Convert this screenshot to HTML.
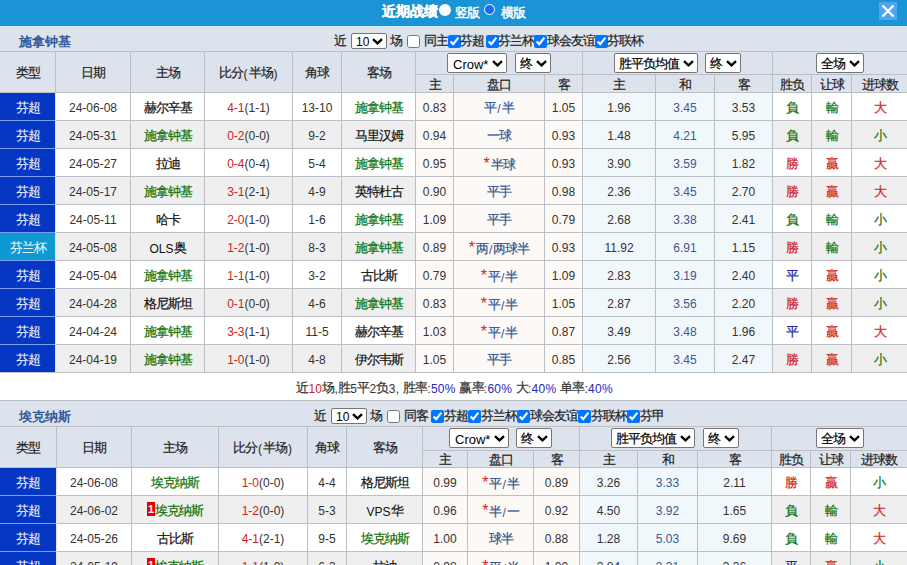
<!DOCTYPE html><html><head><meta charset="utf-8"><style>
html,body{margin:0;padding:0;width:907px;height:565px;overflow:hidden;background:#fff;font-family:"Liberation Sans",sans-serif;}
#r{position:relative;width:907px;height:565px;overflow:hidden}
#r div{position:absolute}
.t{text-align:center;white-space:nowrap}
.ast{color:#e02020;font-size:16px;position:relative;top:-1px;margin-right:1px}
.c{font-size:13px;letter-spacing:-1px;position:relative;top:-1px;-webkit-text-stroke:0.2px currentColor}
.ns .c{-webkit-text-stroke:0}
.w4 .c{-webkit-text-stroke:0.45px currentColor}
.sum .c{letter-spacing:-0.75px}
</style></head><body><div id="r">
<div style="left:0px;top:0px;width:907px;height:26px;background:#1a94d6;"></div>
<div style="left:0px;top:26px;width:907px;height:1px;background:#d2eaf8;"></div>
<div style="left:0px;top:27px;width:907px;height:24px;background:#dde3ed;"></div>
<div style="left:0px;top:52px;width:907px;height:40px;background:#dde3ed;"></div>
<div style="left:0px;top:93px;width:907px;height:27px;background:#ffffff;"></div>
<div style="left:416px;top:93px;width:166px;height:27px;background:#fcf9f6;"></div>
<div style="left:583px;top:93px;width:189px;height:27px;background:#f1f8fb;"></div>
<div style="left:0px;top:121px;width:907px;height:27px;background:#efefef;"></div>
<div style="left:416px;top:121px;width:166px;height:27px;background:#fcf9f6;"></div>
<div style="left:583px;top:121px;width:189px;height:27px;background:#f1f8fb;"></div>
<div style="left:0px;top:149px;width:907px;height:27px;background:#ffffff;"></div>
<div style="left:416px;top:149px;width:166px;height:27px;background:#fcf9f6;"></div>
<div style="left:583px;top:149px;width:189px;height:27px;background:#f1f8fb;"></div>
<div style="left:0px;top:177px;width:907px;height:27px;background:#efefef;"></div>
<div style="left:416px;top:177px;width:166px;height:27px;background:#fcf9f6;"></div>
<div style="left:583px;top:177px;width:189px;height:27px;background:#f1f8fb;"></div>
<div style="left:0px;top:205px;width:907px;height:27px;background:#ffffff;"></div>
<div style="left:416px;top:205px;width:166px;height:27px;background:#fcf9f6;"></div>
<div style="left:583px;top:205px;width:189px;height:27px;background:#f1f8fb;"></div>
<div style="left:0px;top:233px;width:907px;height:27px;background:#efefef;"></div>
<div style="left:416px;top:233px;width:166px;height:27px;background:#fcf9f6;"></div>
<div style="left:583px;top:233px;width:189px;height:27px;background:#f1f8fb;"></div>
<div style="left:0px;top:261px;width:907px;height:27px;background:#ffffff;"></div>
<div style="left:416px;top:261px;width:166px;height:27px;background:#fcf9f6;"></div>
<div style="left:583px;top:261px;width:189px;height:27px;background:#f1f8fb;"></div>
<div style="left:0px;top:289px;width:907px;height:27px;background:#efefef;"></div>
<div style="left:416px;top:289px;width:166px;height:27px;background:#fcf9f6;"></div>
<div style="left:583px;top:289px;width:189px;height:27px;background:#f1f8fb;"></div>
<div style="left:0px;top:317px;width:907px;height:27px;background:#ffffff;"></div>
<div style="left:416px;top:317px;width:166px;height:27px;background:#fcf9f6;"></div>
<div style="left:583px;top:317px;width:189px;height:27px;background:#f1f8fb;"></div>
<div style="left:0px;top:345px;width:907px;height:27px;background:#efefef;"></div>
<div style="left:416px;top:345px;width:166px;height:27px;background:#fcf9f6;"></div>
<div style="left:583px;top:345px;width:189px;height:27px;background:#f1f8fb;"></div>
<div style="left:0px;top:51px;width:907px;height:1px;background:#bcc0c5;"></div>
<div style="left:416px;top:74px;width:491px;height:1px;background:#bcc0c5;"></div>
<div style="left:0px;top:92px;width:907px;height:1px;background:#bcc0c5;"></div>
<div style="left:0px;top:120px;width:907px;height:1px;background:#bcc0c5;"></div>
<div style="left:0px;top:148px;width:907px;height:1px;background:#bcc0c5;"></div>
<div style="left:0px;top:176px;width:907px;height:1px;background:#bcc0c5;"></div>
<div style="left:0px;top:204px;width:907px;height:1px;background:#bcc0c5;"></div>
<div style="left:0px;top:232px;width:907px;height:1px;background:#bcc0c5;"></div>
<div style="left:0px;top:260px;width:907px;height:1px;background:#bcc0c5;"></div>
<div style="left:0px;top:288px;width:907px;height:1px;background:#bcc0c5;"></div>
<div style="left:0px;top:316px;width:907px;height:1px;background:#bcc0c5;"></div>
<div style="left:0px;top:344px;width:907px;height:1px;background:#bcc0c5;"></div>
<div style="left:0px;top:372px;width:907px;height:1px;background:#bcc0c5;"></div>
<div style="left:55px;top:51px;width:1px;height:322px;background:#bcc0c5;"></div>
<div style="left:130px;top:51px;width:1px;height:322px;background:#bcc0c5;"></div>
<div style="left:204px;top:51px;width:1px;height:322px;background:#bcc0c5;"></div>
<div style="left:292px;top:51px;width:1px;height:322px;background:#bcc0c5;"></div>
<div style="left:341px;top:51px;width:1px;height:322px;background:#bcc0c5;"></div>
<div style="left:415px;top:51px;width:1px;height:322px;background:#bcc0c5;"></div>
<div style="left:453px;top:74px;width:1px;height:299px;background:#bcc0c5;"></div>
<div style="left:544px;top:74px;width:1px;height:299px;background:#bcc0c5;"></div>
<div style="left:582px;top:51px;width:1px;height:322px;background:#bcc0c5;"></div>
<div style="left:655px;top:74px;width:1px;height:299px;background:#bcc0c5;"></div>
<div style="left:714px;top:74px;width:1px;height:299px;background:#bcc0c5;"></div>
<div style="left:772px;top:51px;width:1px;height:322px;background:#bcc0c5;"></div>
<div style="left:811px;top:74px;width:1px;height:299px;background:#bcc0c5;"></div>
<div style="left:851px;top:74px;width:1px;height:299px;background:#bcc0c5;"></div>
<div style="left:0px;top:93px;width:55px;height:27px;background:#0537c4;"></div>
<div style="left:0px;top:120px;width:55px;height:28px;background:#0537c4;"></div>
<div style="left:0px;top:148px;width:55px;height:28px;background:#0537c4;"></div>
<div style="left:0px;top:176px;width:55px;height:28px;background:#0537c4;"></div>
<div style="left:0px;top:204px;width:55px;height:28px;background:#0537c4;"></div>
<div style="left:0px;top:232px;width:55px;height:28px;background:#0e9ad0;"></div>
<div style="left:0px;top:260px;width:55px;height:28px;background:#0537c4;"></div>
<div style="left:0px;top:288px;width:55px;height:28px;background:#0537c4;"></div>
<div style="left:0px;top:316px;width:55px;height:28px;background:#0537c4;"></div>
<div style="left:0px;top:344px;width:55px;height:28px;background:#0537c4;"></div>
<div style="left:0px;top:120px;width:55px;height:1px;background:#7c9bee;"></div>
<div style="left:0px;top:148px;width:55px;height:1px;background:#7c9bee;"></div>
<div style="left:0px;top:176px;width:55px;height:1px;background:#7c9bee;"></div>
<div style="left:0px;top:204px;width:55px;height:1px;background:#7c9bee;"></div>
<div style="left:0px;top:232px;width:55px;height:1px;background:#7c9bee;"></div>
<div style="left:0px;top:260px;width:55px;height:1px;background:#7c9bee;"></div>
<div style="left:0px;top:288px;width:55px;height:1px;background:#7c9bee;"></div>
<div style="left:0px;top:316px;width:55px;height:1px;background:#7c9bee;"></div>
<div style="left:0px;top:344px;width:55px;height:1px;background:#7c9bee;"></div>
<div style="left:55px;top:93px;width:1px;height:279px;background:#dce4ff;"></div>
<div class="t " style="left:0px;top:54px;width:55px;height:40px;line-height:40px;color:#222;font-size:12px;font-weight:normal;"><span class="c">类型</span></div>
<div class="t " style="left:56px;top:54px;width:74px;height:40px;line-height:40px;color:#222;font-size:12px;font-weight:normal;"><span class="c">日期</span></div>
<div class="t " style="left:131px;top:54px;width:73px;height:40px;line-height:40px;color:#222;font-size:12px;font-weight:normal;"><span class="c">主场</span></div>
<div class="t " style="left:205px;top:54px;width:87px;height:40px;line-height:40px;color:#222;font-size:12px;font-weight:normal;"><span class="c">比分</span><span style="margin:0 1px">(</span><span class="c">半场</span><span style="margin:0 1px">)</span></div>
<div class="t " style="left:293px;top:54px;width:48px;height:40px;line-height:40px;color:#222;font-size:12px;font-weight:normal;"><span class="c">角球</span></div>
<div class="t " style="left:342px;top:54px;width:73px;height:40px;line-height:40px;color:#222;font-size:12px;font-weight:normal;"><span class="c">客场</span></div>
<div class="t " style="left:416px;top:77px;width:37px;height:17px;line-height:17px;color:#222;font-size:12px;font-weight:normal;"><span class="c">主</span></div>
<div class="t " style="left:454px;top:77px;width:90px;height:17px;line-height:17px;color:#222;font-size:12px;font-weight:normal;"><span class="c">盘口</span></div>
<div class="t " style="left:545px;top:77px;width:37px;height:17px;line-height:17px;color:#222;font-size:12px;font-weight:normal;"><span class="c">客</span></div>
<div class="t " style="left:583px;top:77px;width:72px;height:17px;line-height:17px;color:#222;font-size:12px;font-weight:normal;"><span class="c">主</span></div>
<div class="t " style="left:656px;top:77px;width:58px;height:17px;line-height:17px;color:#222;font-size:12px;font-weight:normal;"><span class="c">和</span></div>
<div class="t " style="left:715px;top:77px;width:57px;height:17px;line-height:17px;color:#222;font-size:12px;font-weight:normal;"><span class="c">客</span></div>
<div class="t " style="left:773px;top:77px;width:38px;height:17px;line-height:17px;color:#222;font-size:12px;font-weight:normal;"><span class="c">胜负</span></div>
<div class="t " style="left:812px;top:77px;width:39px;height:17px;line-height:17px;color:#222;font-size:12px;font-weight:normal;"><span class="c">让球</span></div>
<div class="t " style="left:852px;top:77px;width:55px;height:17px;line-height:17px;color:#222;font-size:12px;font-weight:normal;"><span class="c">进球数</span></div>
<div class="t ns" style="left:0px;top:95px;width:55px;height:27px;line-height:27px;color:#fff;font-size:12px;font-weight:normal;"><span class="c">芬超</span></div>
<div class="t " style="left:56px;top:95px;width:74px;height:27px;line-height:27px;color:#333;font-size:12px;font-weight:normal;">24-06-08</div>
<div class="t " style="left:131px;top:95px;width:73px;height:27px;line-height:27px;color:#111;font-size:12px;font-weight:normal;"><span class="c">赫尔辛基</span></div>
<div class="t " style="left:205px;top:95px;width:87px;height:27px;line-height:27px;color:#333;font-size:12px;font-weight:normal;"><span style="color:#d01c1c">4-1</span>(1-1)</div>
<div class="t " style="left:293px;top:95px;width:48px;height:27px;line-height:27px;color:#333;font-size:12px;font-weight:normal;">13-10</div>
<div class="t " style="left:342px;top:95px;width:73px;height:27px;line-height:27px;color:#0b720b;font-size:12px;font-weight:normal;"><span class="c">施拿钟基</span></div>
<div class="t " style="left:416px;top:95px;width:37px;height:27px;line-height:27px;color:#333;font-size:12px;font-weight:normal;">0.83</div>
<div class="t " style="left:454px;top:95px;width:90px;height:27px;line-height:27px;color:#2f5590;font-size:12px;font-weight:normal;"><span class="c">平</span><span style="margin:0 1px">/</span><span class="c">半</span></div>
<div class="t " style="left:545px;top:95px;width:37px;height:27px;line-height:27px;color:#333;font-size:12px;font-weight:normal;">1.05</div>
<div class="t " style="left:583px;top:95px;width:72px;height:27px;line-height:27px;color:#333;font-size:12px;font-weight:normal;">1.96</div>
<div class="t " style="left:656px;top:95px;width:58px;height:27px;line-height:27px;color:#3a5a90;font-size:12px;font-weight:normal;">3.45</div>
<div class="t " style="left:715px;top:95px;width:57px;height:27px;line-height:27px;color:#333;font-size:12px;font-weight:normal;">3.53</div>
<div class="t " style="left:773px;top:95px;width:38px;height:27px;line-height:27px;color:#0b720b;font-size:12px;font-weight:normal;"><span class="c">負</span></div>
<div class="t " style="left:812px;top:95px;width:39px;height:27px;line-height:27px;color:#0b720b;font-size:12px;font-weight:normal;"><span class="c">輸</span></div>
<div class="t " style="left:852px;top:95px;width:55px;height:27px;line-height:27px;color:#d01c1c;font-size:12px;font-weight:normal;"><span class="c">大</span></div>
<div class="t ns" style="left:0px;top:123px;width:55px;height:27px;line-height:27px;color:#fff;font-size:12px;font-weight:normal;"><span class="c">芬超</span></div>
<div class="t " style="left:56px;top:123px;width:74px;height:27px;line-height:27px;color:#333;font-size:12px;font-weight:normal;">24-05-31</div>
<div class="t " style="left:131px;top:123px;width:73px;height:27px;line-height:27px;color:#0b720b;font-size:12px;font-weight:normal;"><span class="c">施拿钟基</span></div>
<div class="t " style="left:205px;top:123px;width:87px;height:27px;line-height:27px;color:#333;font-size:12px;font-weight:normal;"><span style="color:#d01c1c">0-2</span>(0-0)</div>
<div class="t " style="left:293px;top:123px;width:48px;height:27px;line-height:27px;color:#333;font-size:12px;font-weight:normal;">9-2</div>
<div class="t " style="left:342px;top:123px;width:73px;height:27px;line-height:27px;color:#111;font-size:12px;font-weight:normal;"><span class="c">马里汉姆</span></div>
<div class="t " style="left:416px;top:123px;width:37px;height:27px;line-height:27px;color:#333;font-size:12px;font-weight:normal;">0.94</div>
<div class="t " style="left:454px;top:123px;width:90px;height:27px;line-height:27px;color:#2f5590;font-size:12px;font-weight:normal;"><span class="c">一球</span></div>
<div class="t " style="left:545px;top:123px;width:37px;height:27px;line-height:27px;color:#333;font-size:12px;font-weight:normal;">0.93</div>
<div class="t " style="left:583px;top:123px;width:72px;height:27px;line-height:27px;color:#333;font-size:12px;font-weight:normal;">1.48</div>
<div class="t " style="left:656px;top:123px;width:58px;height:27px;line-height:27px;color:#3a5a90;font-size:12px;font-weight:normal;">4.21</div>
<div class="t " style="left:715px;top:123px;width:57px;height:27px;line-height:27px;color:#333;font-size:12px;font-weight:normal;">5.95</div>
<div class="t " style="left:773px;top:123px;width:38px;height:27px;line-height:27px;color:#0b720b;font-size:12px;font-weight:normal;"><span class="c">負</span></div>
<div class="t " style="left:812px;top:123px;width:39px;height:27px;line-height:27px;color:#0b720b;font-size:12px;font-weight:normal;"><span class="c">輸</span></div>
<div class="t " style="left:852px;top:123px;width:55px;height:27px;line-height:27px;color:#0b720b;font-size:12px;font-weight:normal;"><span class="c">小</span></div>
<div class="t ns" style="left:0px;top:151px;width:55px;height:27px;line-height:27px;color:#fff;font-size:12px;font-weight:normal;"><span class="c">芬超</span></div>
<div class="t " style="left:56px;top:151px;width:74px;height:27px;line-height:27px;color:#333;font-size:12px;font-weight:normal;">24-05-27</div>
<div class="t " style="left:131px;top:151px;width:73px;height:27px;line-height:27px;color:#111;font-size:12px;font-weight:normal;"><span class="c">拉迪</span></div>
<div class="t " style="left:205px;top:151px;width:87px;height:27px;line-height:27px;color:#333;font-size:12px;font-weight:normal;"><span style="color:#d01c1c">0-4</span>(0-4)</div>
<div class="t " style="left:293px;top:151px;width:48px;height:27px;line-height:27px;color:#333;font-size:12px;font-weight:normal;">5-4</div>
<div class="t " style="left:342px;top:151px;width:73px;height:27px;line-height:27px;color:#0b720b;font-size:12px;font-weight:normal;"><span class="c">施拿钟基</span></div>
<div class="t " style="left:416px;top:151px;width:37px;height:27px;line-height:27px;color:#333;font-size:12px;font-weight:normal;">0.95</div>
<div class="t " style="left:454px;top:151px;width:90px;height:27px;line-height:27px;color:#2f5590;font-size:12px;font-weight:normal;"><span class="ast">*</span><span class="c">半球</span></div>
<div class="t " style="left:545px;top:151px;width:37px;height:27px;line-height:27px;color:#333;font-size:12px;font-weight:normal;">0.93</div>
<div class="t " style="left:583px;top:151px;width:72px;height:27px;line-height:27px;color:#333;font-size:12px;font-weight:normal;">3.90</div>
<div class="t " style="left:656px;top:151px;width:58px;height:27px;line-height:27px;color:#3a5a90;font-size:12px;font-weight:normal;">3.59</div>
<div class="t " style="left:715px;top:151px;width:57px;height:27px;line-height:27px;color:#333;font-size:12px;font-weight:normal;">1.82</div>
<div class="t " style="left:773px;top:151px;width:38px;height:27px;line-height:27px;color:#d01c1c;font-size:12px;font-weight:normal;"><span class="c">勝</span></div>
<div class="t " style="left:812px;top:151px;width:39px;height:27px;line-height:27px;color:#d01c1c;font-size:12px;font-weight:normal;"><span class="c">贏</span></div>
<div class="t " style="left:852px;top:151px;width:55px;height:27px;line-height:27px;color:#d01c1c;font-size:12px;font-weight:normal;"><span class="c">大</span></div>
<div class="t ns" style="left:0px;top:179px;width:55px;height:27px;line-height:27px;color:#fff;font-size:12px;font-weight:normal;"><span class="c">芬超</span></div>
<div class="t " style="left:56px;top:179px;width:74px;height:27px;line-height:27px;color:#333;font-size:12px;font-weight:normal;">24-05-17</div>
<div class="t " style="left:131px;top:179px;width:73px;height:27px;line-height:27px;color:#0b720b;font-size:12px;font-weight:normal;"><span class="c">施拿钟基</span></div>
<div class="t " style="left:205px;top:179px;width:87px;height:27px;line-height:27px;color:#333;font-size:12px;font-weight:normal;"><span style="color:#d01c1c">3-1</span>(2-1)</div>
<div class="t " style="left:293px;top:179px;width:48px;height:27px;line-height:27px;color:#333;font-size:12px;font-weight:normal;">4-9</div>
<div class="t " style="left:342px;top:179px;width:73px;height:27px;line-height:27px;color:#111;font-size:12px;font-weight:normal;"><span class="c">英特杜古</span></div>
<div class="t " style="left:416px;top:179px;width:37px;height:27px;line-height:27px;color:#333;font-size:12px;font-weight:normal;">0.90</div>
<div class="t " style="left:454px;top:179px;width:90px;height:27px;line-height:27px;color:#2f5590;font-size:12px;font-weight:normal;"><span class="c">平手</span></div>
<div class="t " style="left:545px;top:179px;width:37px;height:27px;line-height:27px;color:#333;font-size:12px;font-weight:normal;">0.98</div>
<div class="t " style="left:583px;top:179px;width:72px;height:27px;line-height:27px;color:#333;font-size:12px;font-weight:normal;">2.36</div>
<div class="t " style="left:656px;top:179px;width:58px;height:27px;line-height:27px;color:#3a5a90;font-size:12px;font-weight:normal;">3.45</div>
<div class="t " style="left:715px;top:179px;width:57px;height:27px;line-height:27px;color:#333;font-size:12px;font-weight:normal;">2.70</div>
<div class="t " style="left:773px;top:179px;width:38px;height:27px;line-height:27px;color:#d01c1c;font-size:12px;font-weight:normal;"><span class="c">勝</span></div>
<div class="t " style="left:812px;top:179px;width:39px;height:27px;line-height:27px;color:#d01c1c;font-size:12px;font-weight:normal;"><span class="c">贏</span></div>
<div class="t " style="left:852px;top:179px;width:55px;height:27px;line-height:27px;color:#d01c1c;font-size:12px;font-weight:normal;"><span class="c">大</span></div>
<div class="t ns" style="left:0px;top:207px;width:55px;height:27px;line-height:27px;color:#fff;font-size:12px;font-weight:normal;"><span class="c">芬超</span></div>
<div class="t " style="left:56px;top:207px;width:74px;height:27px;line-height:27px;color:#333;font-size:12px;font-weight:normal;">24-05-11</div>
<div class="t " style="left:131px;top:207px;width:73px;height:27px;line-height:27px;color:#111;font-size:12px;font-weight:normal;"><span class="c">哈卡</span></div>
<div class="t " style="left:205px;top:207px;width:87px;height:27px;line-height:27px;color:#333;font-size:12px;font-weight:normal;"><span style="color:#d01c1c">2-0</span>(1-0)</div>
<div class="t " style="left:293px;top:207px;width:48px;height:27px;line-height:27px;color:#333;font-size:12px;font-weight:normal;">1-6</div>
<div class="t " style="left:342px;top:207px;width:73px;height:27px;line-height:27px;color:#0b720b;font-size:12px;font-weight:normal;"><span class="c">施拿钟基</span></div>
<div class="t " style="left:416px;top:207px;width:37px;height:27px;line-height:27px;color:#333;font-size:12px;font-weight:normal;">1.09</div>
<div class="t " style="left:454px;top:207px;width:90px;height:27px;line-height:27px;color:#2f5590;font-size:12px;font-weight:normal;"><span class="c">平手</span></div>
<div class="t " style="left:545px;top:207px;width:37px;height:27px;line-height:27px;color:#333;font-size:12px;font-weight:normal;">0.79</div>
<div class="t " style="left:583px;top:207px;width:72px;height:27px;line-height:27px;color:#333;font-size:12px;font-weight:normal;">2.68</div>
<div class="t " style="left:656px;top:207px;width:58px;height:27px;line-height:27px;color:#3a5a90;font-size:12px;font-weight:normal;">3.38</div>
<div class="t " style="left:715px;top:207px;width:57px;height:27px;line-height:27px;color:#333;font-size:12px;font-weight:normal;">2.41</div>
<div class="t " style="left:773px;top:207px;width:38px;height:27px;line-height:27px;color:#0b720b;font-size:12px;font-weight:normal;"><span class="c">負</span></div>
<div class="t " style="left:812px;top:207px;width:39px;height:27px;line-height:27px;color:#0b720b;font-size:12px;font-weight:normal;"><span class="c">輸</span></div>
<div class="t " style="left:852px;top:207px;width:55px;height:27px;line-height:27px;color:#0b720b;font-size:12px;font-weight:normal;"><span class="c">小</span></div>
<div class="t ns" style="left:0px;top:235px;width:55px;height:27px;line-height:27px;color:#fff;font-size:12px;font-weight:normal;"><span class="c">芬兰杯</span></div>
<div class="t " style="left:56px;top:235px;width:74px;height:27px;line-height:27px;color:#333;font-size:12px;font-weight:normal;">24-05-08</div>
<div class="t " style="left:131px;top:235px;width:73px;height:27px;line-height:27px;color:#111;font-size:12px;font-weight:normal;">OLS<span class="c">奥</span></div>
<div class="t " style="left:205px;top:235px;width:87px;height:27px;line-height:27px;color:#333;font-size:12px;font-weight:normal;"><span style="color:#d01c1c">1-2</span>(1-0)</div>
<div class="t " style="left:293px;top:235px;width:48px;height:27px;line-height:27px;color:#333;font-size:12px;font-weight:normal;">8-3</div>
<div class="t " style="left:342px;top:235px;width:73px;height:27px;line-height:27px;color:#0b720b;font-size:12px;font-weight:normal;"><span class="c">施拿钟基</span></div>
<div class="t " style="left:416px;top:235px;width:37px;height:27px;line-height:27px;color:#333;font-size:12px;font-weight:normal;">0.89</div>
<div class="t " style="left:454px;top:235px;width:90px;height:27px;line-height:27px;color:#2f5590;font-size:12px;font-weight:normal;"><span class="ast">*</span><span class="c">两</span><span style="margin:0 1px">/</span><span class="c">两球半</span></div>
<div class="t " style="left:545px;top:235px;width:37px;height:27px;line-height:27px;color:#333;font-size:12px;font-weight:normal;">0.93</div>
<div class="t " style="left:583px;top:235px;width:72px;height:27px;line-height:27px;color:#333;font-size:12px;font-weight:normal;">11.92</div>
<div class="t " style="left:656px;top:235px;width:58px;height:27px;line-height:27px;color:#3a5a90;font-size:12px;font-weight:normal;">6.91</div>
<div class="t " style="left:715px;top:235px;width:57px;height:27px;line-height:27px;color:#333;font-size:12px;font-weight:normal;">1.15</div>
<div class="t " style="left:773px;top:235px;width:38px;height:27px;line-height:27px;color:#d01c1c;font-size:12px;font-weight:normal;"><span class="c">勝</span></div>
<div class="t " style="left:812px;top:235px;width:39px;height:27px;line-height:27px;color:#0b720b;font-size:12px;font-weight:normal;"><span class="c">輸</span></div>
<div class="t " style="left:852px;top:235px;width:55px;height:27px;line-height:27px;color:#0b720b;font-size:12px;font-weight:normal;"><span class="c">小</span></div>
<div class="t ns" style="left:0px;top:263px;width:55px;height:27px;line-height:27px;color:#fff;font-size:12px;font-weight:normal;"><span class="c">芬超</span></div>
<div class="t " style="left:56px;top:263px;width:74px;height:27px;line-height:27px;color:#333;font-size:12px;font-weight:normal;">24-05-04</div>
<div class="t " style="left:131px;top:263px;width:73px;height:27px;line-height:27px;color:#0b720b;font-size:12px;font-weight:normal;"><span class="c">施拿钟基</span></div>
<div class="t " style="left:205px;top:263px;width:87px;height:27px;line-height:27px;color:#333;font-size:12px;font-weight:normal;"><span style="color:#d01c1c">1-1</span>(1-0)</div>
<div class="t " style="left:293px;top:263px;width:48px;height:27px;line-height:27px;color:#333;font-size:12px;font-weight:normal;">3-2</div>
<div class="t " style="left:342px;top:263px;width:73px;height:27px;line-height:27px;color:#111;font-size:12px;font-weight:normal;"><span class="c">古比斯</span></div>
<div class="t " style="left:416px;top:263px;width:37px;height:27px;line-height:27px;color:#333;font-size:12px;font-weight:normal;">0.79</div>
<div class="t " style="left:454px;top:263px;width:90px;height:27px;line-height:27px;color:#2f5590;font-size:12px;font-weight:normal;"><span class="ast">*</span><span class="c">平</span><span style="margin:0 1px">/</span><span class="c">半</span></div>
<div class="t " style="left:545px;top:263px;width:37px;height:27px;line-height:27px;color:#333;font-size:12px;font-weight:normal;">1.09</div>
<div class="t " style="left:583px;top:263px;width:72px;height:27px;line-height:27px;color:#333;font-size:12px;font-weight:normal;">2.83</div>
<div class="t " style="left:656px;top:263px;width:58px;height:27px;line-height:27px;color:#3a5a90;font-size:12px;font-weight:normal;">3.19</div>
<div class="t " style="left:715px;top:263px;width:57px;height:27px;line-height:27px;color:#333;font-size:12px;font-weight:normal;">2.40</div>
<div class="t " style="left:773px;top:263px;width:38px;height:27px;line-height:27px;color:#1a1aa0;font-size:12px;font-weight:normal;"><span class="c">平</span></div>
<div class="t " style="left:812px;top:263px;width:39px;height:27px;line-height:27px;color:#d01c1c;font-size:12px;font-weight:normal;"><span class="c">贏</span></div>
<div class="t " style="left:852px;top:263px;width:55px;height:27px;line-height:27px;color:#0b720b;font-size:12px;font-weight:normal;"><span class="c">小</span></div>
<div class="t ns" style="left:0px;top:291px;width:55px;height:27px;line-height:27px;color:#fff;font-size:12px;font-weight:normal;"><span class="c">芬超</span></div>
<div class="t " style="left:56px;top:291px;width:74px;height:27px;line-height:27px;color:#333;font-size:12px;font-weight:normal;">24-04-28</div>
<div class="t " style="left:131px;top:291px;width:73px;height:27px;line-height:27px;color:#111;font-size:12px;font-weight:normal;"><span class="c">格尼斯坦</span></div>
<div class="t " style="left:205px;top:291px;width:87px;height:27px;line-height:27px;color:#333;font-size:12px;font-weight:normal;"><span style="color:#d01c1c">0-1</span>(0-0)</div>
<div class="t " style="left:293px;top:291px;width:48px;height:27px;line-height:27px;color:#333;font-size:12px;font-weight:normal;">4-6</div>
<div class="t " style="left:342px;top:291px;width:73px;height:27px;line-height:27px;color:#0b720b;font-size:12px;font-weight:normal;"><span class="c">施拿钟基</span></div>
<div class="t " style="left:416px;top:291px;width:37px;height:27px;line-height:27px;color:#333;font-size:12px;font-weight:normal;">0.83</div>
<div class="t " style="left:454px;top:291px;width:90px;height:27px;line-height:27px;color:#2f5590;font-size:12px;font-weight:normal;"><span class="ast">*</span><span class="c">平</span><span style="margin:0 1px">/</span><span class="c">半</span></div>
<div class="t " style="left:545px;top:291px;width:37px;height:27px;line-height:27px;color:#333;font-size:12px;font-weight:normal;">1.05</div>
<div class="t " style="left:583px;top:291px;width:72px;height:27px;line-height:27px;color:#333;font-size:12px;font-weight:normal;">2.87</div>
<div class="t " style="left:656px;top:291px;width:58px;height:27px;line-height:27px;color:#3a5a90;font-size:12px;font-weight:normal;">3.56</div>
<div class="t " style="left:715px;top:291px;width:57px;height:27px;line-height:27px;color:#333;font-size:12px;font-weight:normal;">2.20</div>
<div class="t " style="left:773px;top:291px;width:38px;height:27px;line-height:27px;color:#d01c1c;font-size:12px;font-weight:normal;"><span class="c">勝</span></div>
<div class="t " style="left:812px;top:291px;width:39px;height:27px;line-height:27px;color:#d01c1c;font-size:12px;font-weight:normal;"><span class="c">贏</span></div>
<div class="t " style="left:852px;top:291px;width:55px;height:27px;line-height:27px;color:#0b720b;font-size:12px;font-weight:normal;"><span class="c">小</span></div>
<div class="t ns" style="left:0px;top:319px;width:55px;height:27px;line-height:27px;color:#fff;font-size:12px;font-weight:normal;"><span class="c">芬超</span></div>
<div class="t " style="left:56px;top:319px;width:74px;height:27px;line-height:27px;color:#333;font-size:12px;font-weight:normal;">24-04-24</div>
<div class="t " style="left:131px;top:319px;width:73px;height:27px;line-height:27px;color:#0b720b;font-size:12px;font-weight:normal;"><span class="c">施拿钟基</span></div>
<div class="t " style="left:205px;top:319px;width:87px;height:27px;line-height:27px;color:#333;font-size:12px;font-weight:normal;"><span style="color:#d01c1c">3-3</span>(1-1)</div>
<div class="t " style="left:293px;top:319px;width:48px;height:27px;line-height:27px;color:#333;font-size:12px;font-weight:normal;">11-5</div>
<div class="t " style="left:342px;top:319px;width:73px;height:27px;line-height:27px;color:#111;font-size:12px;font-weight:normal;"><span class="c">赫尔辛基</span></div>
<div class="t " style="left:416px;top:319px;width:37px;height:27px;line-height:27px;color:#333;font-size:12px;font-weight:normal;">1.03</div>
<div class="t " style="left:454px;top:319px;width:90px;height:27px;line-height:27px;color:#2f5590;font-size:12px;font-weight:normal;"><span class="ast">*</span><span class="c">平</span><span style="margin:0 1px">/</span><span class="c">半</span></div>
<div class="t " style="left:545px;top:319px;width:37px;height:27px;line-height:27px;color:#333;font-size:12px;font-weight:normal;">0.87</div>
<div class="t " style="left:583px;top:319px;width:72px;height:27px;line-height:27px;color:#333;font-size:12px;font-weight:normal;">3.49</div>
<div class="t " style="left:656px;top:319px;width:58px;height:27px;line-height:27px;color:#3a5a90;font-size:12px;font-weight:normal;">3.48</div>
<div class="t " style="left:715px;top:319px;width:57px;height:27px;line-height:27px;color:#333;font-size:12px;font-weight:normal;">1.96</div>
<div class="t " style="left:773px;top:319px;width:38px;height:27px;line-height:27px;color:#1a1aa0;font-size:12px;font-weight:normal;"><span class="c">平</span></div>
<div class="t " style="left:812px;top:319px;width:39px;height:27px;line-height:27px;color:#d01c1c;font-size:12px;font-weight:normal;"><span class="c">贏</span></div>
<div class="t " style="left:852px;top:319px;width:55px;height:27px;line-height:27px;color:#d01c1c;font-size:12px;font-weight:normal;"><span class="c">大</span></div>
<div class="t ns" style="left:0px;top:347px;width:55px;height:27px;line-height:27px;color:#fff;font-size:12px;font-weight:normal;"><span class="c">芬超</span></div>
<div class="t " style="left:56px;top:347px;width:74px;height:27px;line-height:27px;color:#333;font-size:12px;font-weight:normal;">24-04-19</div>
<div class="t " style="left:131px;top:347px;width:73px;height:27px;line-height:27px;color:#0b720b;font-size:12px;font-weight:normal;"><span class="c">施拿钟基</span></div>
<div class="t " style="left:205px;top:347px;width:87px;height:27px;line-height:27px;color:#333;font-size:12px;font-weight:normal;"><span style="color:#d01c1c">1-0</span>(1-0)</div>
<div class="t " style="left:293px;top:347px;width:48px;height:27px;line-height:27px;color:#333;font-size:12px;font-weight:normal;">4-8</div>
<div class="t " style="left:342px;top:347px;width:73px;height:27px;line-height:27px;color:#111;font-size:12px;font-weight:normal;"><span class="c">伊尔韦斯</span></div>
<div class="t " style="left:416px;top:347px;width:37px;height:27px;line-height:27px;color:#333;font-size:12px;font-weight:normal;">1.05</div>
<div class="t " style="left:454px;top:347px;width:90px;height:27px;line-height:27px;color:#2f5590;font-size:12px;font-weight:normal;"><span class="c">平手</span></div>
<div class="t " style="left:545px;top:347px;width:37px;height:27px;line-height:27px;color:#333;font-size:12px;font-weight:normal;">0.85</div>
<div class="t " style="left:583px;top:347px;width:72px;height:27px;line-height:27px;color:#333;font-size:12px;font-weight:normal;">2.56</div>
<div class="t " style="left:656px;top:347px;width:58px;height:27px;line-height:27px;color:#3a5a90;font-size:12px;font-weight:normal;">3.45</div>
<div class="t " style="left:715px;top:347px;width:57px;height:27px;line-height:27px;color:#333;font-size:12px;font-weight:normal;">2.47</div>
<div class="t " style="left:773px;top:347px;width:38px;height:27px;line-height:27px;color:#d01c1c;font-size:12px;font-weight:normal;"><span class="c">勝</span></div>
<div class="t " style="left:812px;top:347px;width:39px;height:27px;line-height:27px;color:#d01c1c;font-size:12px;font-weight:normal;"><span class="c">贏</span></div>
<div class="t " style="left:852px;top:347px;width:55px;height:27px;line-height:27px;color:#0b720b;font-size:12px;font-weight:normal;"><span class="c">小</span></div>
<div class="t " style="left:0px;top:30px;width:120px;height:24px;line-height:24px;color:#34589a;font-size:13px;font-weight:bold;text-align:left;padding-left:19px;">施拿钟基</div>
<div style="left:0px;top:373px;width:907px;height:27px;background:#fff;"></div>
<div class="t sum" style="left:0px;top:375px;width:907px;height:27px;line-height:27px;color:#333;font-size:12px;font-weight:normal;letter-spacing:0.25px;padding-left:1px;"><span class="c">近</span><span style="color:#d01c1c">10</span><span class="c">场</span>,<span class="c">胜</span>5<span class="c">平</span>2<span class="c">负</span>3, <span class="c">胜率</span>:<span style="color:#2626c0">50%</span> <span class="c">赢率</span>:<span style="color:#2626c0">60%</span> <span class="c">大</span>:<span style="color:#2626c0">40%</span> <span class="c">单率</span>:<span style="color:#2626c0">40%</span></div>
<div style="left:0px;top:400px;width:907px;height:1px;background:#bcc0c5;"></div>
<div style="left:0px;top:401px;width:907px;height:25px;background:#dde3ed;"></div>
<div style="left:0px;top:427px;width:907px;height:40px;background:#dde3ed;"></div>
<div style="left:0px;top:468px;width:907px;height:27px;background:#ffffff;"></div>
<div style="left:423px;top:468px;width:156px;height:27px;background:#fcf9f6;"></div>
<div style="left:580px;top:468px;width:191px;height:27px;background:#f1f8fb;"></div>
<div style="left:0px;top:496px;width:907px;height:27px;background:#efefef;"></div>
<div style="left:423px;top:496px;width:156px;height:27px;background:#fcf9f6;"></div>
<div style="left:580px;top:496px;width:191px;height:27px;background:#f1f8fb;"></div>
<div style="left:0px;top:524px;width:907px;height:27px;background:#ffffff;"></div>
<div style="left:423px;top:524px;width:156px;height:27px;background:#fcf9f6;"></div>
<div style="left:580px;top:524px;width:191px;height:27px;background:#f1f8fb;"></div>
<div style="left:0px;top:552px;width:907px;height:27px;background:#efefef;"></div>
<div style="left:423px;top:552px;width:156px;height:27px;background:#fcf9f6;"></div>
<div style="left:580px;top:552px;width:191px;height:27px;background:#f1f8fb;"></div>
<div style="left:0px;top:426px;width:907px;height:1px;background:#bcc0c5;"></div>
<div style="left:423px;top:450px;width:484px;height:1px;background:#bcc0c5;"></div>
<div style="left:0px;top:467px;width:907px;height:1px;background:#bcc0c5;"></div>
<div style="left:0px;top:495px;width:907px;height:1px;background:#bcc0c5;"></div>
<div style="left:0px;top:523px;width:907px;height:1px;background:#bcc0c5;"></div>
<div style="left:0px;top:551px;width:907px;height:1px;background:#bcc0c5;"></div>
<div style="left:0px;top:579px;width:907px;height:1px;background:#bcc0c5;"></div>
<div style="left:56px;top:426px;width:1px;height:154px;background:#bcc0c5;"></div>
<div style="left:131px;top:426px;width:1px;height:154px;background:#bcc0c5;"></div>
<div style="left:218px;top:426px;width:1px;height:154px;background:#bcc0c5;"></div>
<div style="left:307px;top:426px;width:1px;height:154px;background:#bcc0c5;"></div>
<div style="left:346px;top:426px;width:1px;height:154px;background:#bcc0c5;"></div>
<div style="left:422px;top:426px;width:1px;height:154px;background:#bcc0c5;"></div>
<div style="left:467px;top:450px;width:1px;height:130px;background:#bcc0c5;"></div>
<div style="left:533px;top:450px;width:1px;height:130px;background:#bcc0c5;"></div>
<div style="left:579px;top:426px;width:1px;height:154px;background:#bcc0c5;"></div>
<div style="left:637px;top:450px;width:1px;height:130px;background:#bcc0c5;"></div>
<div style="left:697px;top:450px;width:1px;height:130px;background:#bcc0c5;"></div>
<div style="left:771px;top:426px;width:1px;height:154px;background:#bcc0c5;"></div>
<div style="left:810px;top:450px;width:1px;height:130px;background:#bcc0c5;"></div>
<div style="left:850px;top:450px;width:1px;height:130px;background:#bcc0c5;"></div>
<div style="left:0px;top:468px;width:56px;height:27px;background:#0537c4;"></div>
<div style="left:0px;top:495px;width:56px;height:28px;background:#0537c4;"></div>
<div style="left:0px;top:523px;width:56px;height:28px;background:#0537c4;"></div>
<div style="left:0px;top:551px;width:56px;height:28px;background:#0537c4;"></div>
<div style="left:0px;top:495px;width:56px;height:1px;background:#7c9bee;"></div>
<div style="left:0px;top:523px;width:56px;height:1px;background:#7c9bee;"></div>
<div style="left:0px;top:551px;width:56px;height:1px;background:#7c9bee;"></div>
<div style="left:56px;top:468px;width:1px;height:111px;background:#dce4ff;"></div>
<div class="t " style="left:0px;top:429px;width:56px;height:40px;line-height:40px;color:#222;font-size:12px;font-weight:normal;"><span class="c">类型</span></div>
<div class="t " style="left:57px;top:429px;width:74px;height:40px;line-height:40px;color:#222;font-size:12px;font-weight:normal;"><span class="c">日期</span></div>
<div class="t " style="left:132px;top:429px;width:86px;height:40px;line-height:40px;color:#222;font-size:12px;font-weight:normal;"><span class="c">主场</span></div>
<div class="t " style="left:219px;top:429px;width:88px;height:40px;line-height:40px;color:#222;font-size:12px;font-weight:normal;"><span class="c">比分</span><span style="margin:0 1px">(</span><span class="c">半场</span><span style="margin:0 1px">)</span></div>
<div class="t " style="left:308px;top:429px;width:38px;height:40px;line-height:40px;color:#222;font-size:12px;font-weight:normal;"><span class="c">角球</span></div>
<div class="t " style="left:347px;top:429px;width:75px;height:40px;line-height:40px;color:#222;font-size:12px;font-weight:normal;"><span class="c">客场</span></div>
<div class="t " style="left:423px;top:453px;width:44px;height:16px;line-height:16px;color:#222;font-size:12px;font-weight:normal;"><span class="c">主</span></div>
<div class="t " style="left:468px;top:453px;width:65px;height:16px;line-height:16px;color:#222;font-size:12px;font-weight:normal;"><span class="c">盘口</span></div>
<div class="t " style="left:534px;top:453px;width:45px;height:16px;line-height:16px;color:#222;font-size:12px;font-weight:normal;"><span class="c">客</span></div>
<div class="t " style="left:580px;top:453px;width:57px;height:16px;line-height:16px;color:#222;font-size:12px;font-weight:normal;"><span class="c">主</span></div>
<div class="t " style="left:638px;top:453px;width:59px;height:16px;line-height:16px;color:#222;font-size:12px;font-weight:normal;"><span class="c">和</span></div>
<div class="t " style="left:698px;top:453px;width:73px;height:16px;line-height:16px;color:#222;font-size:12px;font-weight:normal;"><span class="c">客</span></div>
<div class="t " style="left:772px;top:453px;width:38px;height:16px;line-height:16px;color:#222;font-size:12px;font-weight:normal;"><span class="c">胜负</span></div>
<div class="t " style="left:811px;top:453px;width:39px;height:16px;line-height:16px;color:#222;font-size:12px;font-weight:normal;"><span class="c">让球</span></div>
<div class="t " style="left:851px;top:453px;width:56px;height:16px;line-height:16px;color:#222;font-size:12px;font-weight:normal;"><span class="c">进球数</span></div>
<div class="t ns" style="left:0px;top:470px;width:56px;height:27px;line-height:27px;color:#fff;font-size:12px;font-weight:normal;"><span class="c">芬超</span></div>
<div class="t " style="left:57px;top:470px;width:74px;height:27px;line-height:27px;color:#333;font-size:12px;font-weight:normal;">24-06-08</div>
<div class="t " style="left:132px;top:470px;width:86px;height:27px;line-height:27px;color:#0b720b;font-size:12px;font-weight:normal;"><span class="c">埃克纳斯</span></div>
<div class="t " style="left:219px;top:470px;width:88px;height:27px;line-height:27px;color:#333;font-size:12px;font-weight:normal;"><span style="color:#d01c1c">1-0</span>(0-0)</div>
<div class="t " style="left:308px;top:470px;width:38px;height:27px;line-height:27px;color:#333;font-size:12px;font-weight:normal;">4-4</div>
<div class="t " style="left:347px;top:470px;width:75px;height:27px;line-height:27px;color:#111;font-size:12px;font-weight:normal;"><span class="c">格尼斯坦</span></div>
<div class="t " style="left:423px;top:470px;width:44px;height:27px;line-height:27px;color:#333;font-size:12px;font-weight:normal;">0.99</div>
<div class="t " style="left:468px;top:470px;width:65px;height:27px;line-height:27px;color:#2f5590;font-size:12px;font-weight:normal;"><span class="ast">*</span><span class="c">平</span><span style="margin:0 1px">/</span><span class="c">半</span></div>
<div class="t " style="left:534px;top:470px;width:45px;height:27px;line-height:27px;color:#333;font-size:12px;font-weight:normal;">0.89</div>
<div class="t " style="left:580px;top:470px;width:57px;height:27px;line-height:27px;color:#333;font-size:12px;font-weight:normal;">3.26</div>
<div class="t " style="left:638px;top:470px;width:59px;height:27px;line-height:27px;color:#3a5a90;font-size:12px;font-weight:normal;">3.33</div>
<div class="t " style="left:698px;top:470px;width:73px;height:27px;line-height:27px;color:#333;font-size:12px;font-weight:normal;">2.11</div>
<div class="t " style="left:772px;top:470px;width:38px;height:27px;line-height:27px;color:#d01c1c;font-size:12px;font-weight:normal;"><span class="c">勝</span></div>
<div class="t " style="left:811px;top:470px;width:39px;height:27px;line-height:27px;color:#d01c1c;font-size:12px;font-weight:normal;"><span class="c">贏</span></div>
<div class="t " style="left:851px;top:470px;width:56px;height:27px;line-height:27px;color:#0b720b;font-size:12px;font-weight:normal;"><span class="c">小</span></div>
<div class="t ns" style="left:0px;top:498px;width:56px;height:27px;line-height:27px;color:#fff;font-size:12px;font-weight:normal;"><span class="c">芬超</span></div>
<div class="t " style="left:57px;top:498px;width:74px;height:27px;line-height:27px;color:#333;font-size:12px;font-weight:normal;">24-06-02</div>
<div class="t " style="left:132px;top:498px;width:86px;height:27px;line-height:27px;color:#0b720b;font-size:12px;font-weight:normal;"><span style="display:inline-block;background:#e00000;color:#fff;font-weight:bold;font-size:11px;width:8px;height:14px;line-height:14px;text-align:center;vertical-align:middle;position:relative;top:-4px">1</span><span class="c">埃克纳斯</span></div>
<div class="t " style="left:219px;top:498px;width:88px;height:27px;line-height:27px;color:#333;font-size:12px;font-weight:normal;"><span style="color:#d01c1c">1-2</span>(0-0)</div>
<div class="t " style="left:308px;top:498px;width:38px;height:27px;line-height:27px;color:#333;font-size:12px;font-weight:normal;">5-3</div>
<div class="t " style="left:347px;top:498px;width:75px;height:27px;line-height:27px;color:#111;font-size:12px;font-weight:normal;">VPS<span class="c">华</span></div>
<div class="t " style="left:423px;top:498px;width:44px;height:27px;line-height:27px;color:#333;font-size:12px;font-weight:normal;">0.96</div>
<div class="t " style="left:468px;top:498px;width:65px;height:27px;line-height:27px;color:#2f5590;font-size:12px;font-weight:normal;"><span class="ast">*</span><span class="c">半</span><span style="margin:0 1px">/</span><span class="c">一</span></div>
<div class="t " style="left:534px;top:498px;width:45px;height:27px;line-height:27px;color:#333;font-size:12px;font-weight:normal;">0.92</div>
<div class="t " style="left:580px;top:498px;width:57px;height:27px;line-height:27px;color:#333;font-size:12px;font-weight:normal;">4.50</div>
<div class="t " style="left:638px;top:498px;width:59px;height:27px;line-height:27px;color:#3a5a90;font-size:12px;font-weight:normal;">3.92</div>
<div class="t " style="left:698px;top:498px;width:73px;height:27px;line-height:27px;color:#333;font-size:12px;font-weight:normal;">1.65</div>
<div class="t " style="left:772px;top:498px;width:38px;height:27px;line-height:27px;color:#0b720b;font-size:12px;font-weight:normal;"><span class="c">負</span></div>
<div class="t " style="left:811px;top:498px;width:39px;height:27px;line-height:27px;color:#0b720b;font-size:12px;font-weight:normal;"><span class="c">輸</span></div>
<div class="t " style="left:851px;top:498px;width:56px;height:27px;line-height:27px;color:#d01c1c;font-size:12px;font-weight:normal;"><span class="c">大</span></div>
<div class="t ns" style="left:0px;top:526px;width:56px;height:27px;line-height:27px;color:#fff;font-size:12px;font-weight:normal;"><span class="c">芬超</span></div>
<div class="t " style="left:57px;top:526px;width:74px;height:27px;line-height:27px;color:#333;font-size:12px;font-weight:normal;">24-05-26</div>
<div class="t " style="left:132px;top:526px;width:86px;height:27px;line-height:27px;color:#111;font-size:12px;font-weight:normal;"><span class="c">古比斯</span></div>
<div class="t " style="left:219px;top:526px;width:88px;height:27px;line-height:27px;color:#333;font-size:12px;font-weight:normal;"><span style="color:#d01c1c">4-1</span>(2-1)</div>
<div class="t " style="left:308px;top:526px;width:38px;height:27px;line-height:27px;color:#333;font-size:12px;font-weight:normal;">9-5</div>
<div class="t " style="left:347px;top:526px;width:75px;height:27px;line-height:27px;color:#0b720b;font-size:12px;font-weight:normal;"><span class="c">埃克纳斯</span></div>
<div class="t " style="left:423px;top:526px;width:44px;height:27px;line-height:27px;color:#333;font-size:12px;font-weight:normal;">1.00</div>
<div class="t " style="left:468px;top:526px;width:65px;height:27px;line-height:27px;color:#2f5590;font-size:12px;font-weight:normal;"><span class="c">球半</span></div>
<div class="t " style="left:534px;top:526px;width:45px;height:27px;line-height:27px;color:#333;font-size:12px;font-weight:normal;">0.88</div>
<div class="t " style="left:580px;top:526px;width:57px;height:27px;line-height:27px;color:#333;font-size:12px;font-weight:normal;">1.28</div>
<div class="t " style="left:638px;top:526px;width:59px;height:27px;line-height:27px;color:#3a5a90;font-size:12px;font-weight:normal;">5.03</div>
<div class="t " style="left:698px;top:526px;width:73px;height:27px;line-height:27px;color:#333;font-size:12px;font-weight:normal;">9.69</div>
<div class="t " style="left:772px;top:526px;width:38px;height:27px;line-height:27px;color:#0b720b;font-size:12px;font-weight:normal;"><span class="c">負</span></div>
<div class="t " style="left:811px;top:526px;width:39px;height:27px;line-height:27px;color:#0b720b;font-size:12px;font-weight:normal;"><span class="c">輸</span></div>
<div class="t " style="left:851px;top:526px;width:56px;height:27px;line-height:27px;color:#d01c1c;font-size:12px;font-weight:normal;"><span class="c">大</span></div>
<div class="t ns" style="left:0px;top:554px;width:56px;height:27px;line-height:27px;color:#fff;font-size:12px;font-weight:normal;"><span class="c">芬超</span></div>
<div class="t " style="left:57px;top:554px;width:74px;height:27px;line-height:27px;color:#333;font-size:12px;font-weight:normal;">24-05-19</div>
<div class="t " style="left:132px;top:554px;width:86px;height:27px;line-height:27px;color:#0b720b;font-size:12px;font-weight:normal;"><span style="display:inline-block;background:#e00000;color:#fff;font-weight:bold;font-size:11px;width:8px;height:14px;line-height:14px;text-align:center;vertical-align:middle;position:relative;top:-4px">1</span><span class="c">埃克纳斯</span></div>
<div class="t " style="left:219px;top:554px;width:88px;height:27px;line-height:27px;color:#333;font-size:12px;font-weight:normal;"><span style="color:#d01c1c">1-1</span>(1-0)</div>
<div class="t " style="left:308px;top:554px;width:38px;height:27px;line-height:27px;color:#333;font-size:12px;font-weight:normal;">6-3</div>
<div class="t " style="left:347px;top:554px;width:75px;height:27px;line-height:27px;color:#111;font-size:12px;font-weight:normal;"><span class="c">拉迪</span></div>
<div class="t " style="left:423px;top:554px;width:44px;height:27px;line-height:27px;color:#333;font-size:12px;font-weight:normal;">0.98</div>
<div class="t " style="left:468px;top:554px;width:65px;height:27px;line-height:27px;color:#2f5590;font-size:12px;font-weight:normal;"><span class="ast">*</span><span class="c">平</span><span style="margin:0 1px">/</span><span class="c">半</span></div>
<div class="t " style="left:534px;top:554px;width:45px;height:27px;line-height:27px;color:#333;font-size:12px;font-weight:normal;">1.00</div>
<div class="t " style="left:580px;top:554px;width:57px;height:27px;line-height:27px;color:#333;font-size:12px;font-weight:normal;">2.84</div>
<div class="t " style="left:638px;top:554px;width:59px;height:27px;line-height:27px;color:#3a5a90;font-size:12px;font-weight:normal;">3.31</div>
<div class="t " style="left:698px;top:554px;width:73px;height:27px;line-height:27px;color:#333;font-size:12px;font-weight:normal;">3.36</div>
<div class="t " style="left:772px;top:554px;width:38px;height:27px;line-height:27px;color:#1a1aa0;font-size:12px;font-weight:normal;"><span class="c">平</span></div>
<div class="t " style="left:811px;top:554px;width:39px;height:27px;line-height:27px;color:#d01c1c;font-size:12px;font-weight:normal;"><span class="c">贏</span></div>
<div class="t " style="left:851px;top:554px;width:56px;height:27px;line-height:27px;color:#0b720b;font-size:12px;font-weight:normal;"><span class="c">小</span></div>
<div class="t " style="left:0px;top:404px;width:120px;height:25px;line-height:25px;color:#34589a;font-size:13px;font-weight:bold;text-align:left;padding-left:19px;">埃克纳斯</div>
<div class="t" style="left:382px;top:-2px;height:26px;line-height:26px;color:#fff;font-size:14px;font-weight:bold;text-align:left;-webkit-text-stroke:0.3px #fff">近期战绩</div>
<div style="left:439px;top:4px;width:12px;height:12px;border-radius:50%;background:#fff"></div>
<div class="w4" style="left:455px;top:7px;line-height:14px;height:14px;font-size:12px;color:#fff;white-space:nowrap;"><span class="c">竖版</span></div>
<div style="left:484px;top:4px;width:9px;height:9px;border-radius:50%;background:#1b6cec;border:1.5px solid #fff"></div>
<div class="w4" style="left:501px;top:7px;line-height:14px;height:14px;font-size:12px;color:#fff;white-space:nowrap;"><span class="c">横版</span></div>
<div style="left:879px;top:2px;width:18px;height:18px;background:#4fa6ee"><svg width="18" height="18" viewBox="0 0 18 18" style="position:absolute;left:0;top:0"><path d="M3.5 3.5 L14.5 14.5 M14.5 3.5 L3.5 14.5" stroke="#fff" stroke-width="2.4"/></svg></div>
<div class="" style="left:334px;top:35px;line-height:14px;height:14px;font-size:12px;color:#222;white-space:nowrap;"><span class="c">近</span></div>
<div style="left:351px;top:33px;width:34px;height:14px;border:1px solid #767676;border-radius:2px;background:#fff"><div style="left:4px;top:1px;height:14px;line-height:14px;font-size:12px;color:#000;white-space:nowrap;font-family:"Liberation Mono",monospace;font-size:11px;letter-spacing:-0.5px;">10</div><svg width="11" height="7" viewBox="0 0 11 7" style="position:absolute;right:3px;top:4px"><path d="M1 1.2 L5.5 5.4 L10 1.2" fill="none" stroke="#000" stroke-width="2.3"/></svg></div>
<div class="" style="left:390px;top:35px;line-height:14px;height:14px;font-size:12px;color:#222;white-space:nowrap;"><span class="c">场</span></div>
<input type="checkbox"  style="position:absolute;left:407px;top:35px;width:13px;height:13px;margin:0">
<div class="" style="left:424px;top:35px;line-height:14px;height:14px;font-size:12px;color:#222;white-space:nowrap;"><span class="c">同主</span></div>
<input type="checkbox" checked style="position:absolute;left:448px;top:35px;width:13px;height:13px;margin:0">
<div class="" style="left:460px;top:35px;line-height:14px;height:14px;font-size:12px;color:#222;white-space:nowrap;"><span class="c">芬超</span></div>
<input type="checkbox" checked style="position:absolute;left:486px;top:35px;width:13px;height:13px;margin:0">
<div class="" style="left:498px;top:35px;line-height:14px;height:14px;font-size:12px;color:#222;white-space:nowrap;"><span class="c">芬兰杯</span></div>
<input type="checkbox" checked style="position:absolute;left:534px;top:35px;width:13px;height:13px;margin:0">
<div class="" style="left:547px;top:35px;line-height:14px;height:14px;font-size:12px;color:#222;white-space:nowrap;"><span class="c">球会友谊</span></div>
<input type="checkbox" checked style="position:absolute;left:595px;top:35px;width:13px;height:13px;margin:0">
<div class="" style="left:607px;top:35px;line-height:14px;height:14px;font-size:12px;color:#222;white-space:nowrap;"><span class="c">芬联杯</span></div>
<div style="left:447px;top:53px;width:58px;height:18px;border:1px solid #767676;border-radius:2px;background:#fff"><div style="left:5px;top:2px;height:18px;line-height:18px;font-size:12px;color:#000;white-space:nowrap;font-size:13px;">Crow*</div><svg width="11" height="7" viewBox="0 0 11 7" style="position:absolute;right:3px;top:6px"><path d="M1 1.2 L5.5 5.4 L10 1.2" fill="none" stroke="#000" stroke-width="2.3"/></svg></div>
<div style="left:515px;top:53px;width:34px;height:18px;border:1px solid #767676;border-radius:2px;background:#fff"><div style="left:4px;top:2px;height:18px;line-height:18px;font-size:12px;color:#000;white-space:nowrap;"><span class="c">终</span></div><svg width="11" height="7" viewBox="0 0 11 7" style="position:absolute;right:3px;top:6px"><path d="M1 1.2 L5.5 5.4 L10 1.2" fill="none" stroke="#000" stroke-width="2.3"/></svg></div>
<div style="left:614px;top:53px;width:82px;height:18px;border:1px solid #767676;border-radius:2px;background:#fff"><div style="left:4px;top:2px;height:18px;line-height:18px;font-size:12px;color:#000;white-space:nowrap;"><span class="c">胜平负均值</span></div><svg width="11" height="7" viewBox="0 0 11 7" style="position:absolute;right:3px;top:6px"><path d="M1 1.2 L5.5 5.4 L10 1.2" fill="none" stroke="#000" stroke-width="2.3"/></svg></div>
<div style="left:705px;top:53px;width:34px;height:18px;border:1px solid #767676;border-radius:2px;background:#fff"><div style="left:4px;top:2px;height:18px;line-height:18px;font-size:12px;color:#000;white-space:nowrap;"><span class="c">终</span></div><svg width="11" height="7" viewBox="0 0 11 7" style="position:absolute;right:3px;top:6px"><path d="M1 1.2 L5.5 5.4 L10 1.2" fill="none" stroke="#000" stroke-width="2.3"/></svg></div>
<div style="left:816px;top:53px;width:46px;height:18px;border:1px solid #767676;border-radius:2px;background:#fff"><div style="left:4px;top:2px;height:18px;line-height:18px;font-size:12px;color:#000;white-space:nowrap;"><span class="c">全场</span></div><svg width="11" height="7" viewBox="0 0 11 7" style="position:absolute;right:3px;top:6px"><path d="M1 1.2 L5.5 5.4 L10 1.2" fill="none" stroke="#000" stroke-width="2.3"/></svg></div>
<div class="" style="left:314px;top:410px;line-height:14px;height:14px;font-size:12px;color:#222;white-space:nowrap;"><span class="c">近</span></div>
<div style="left:331px;top:408px;width:34px;height:14px;border:1px solid #767676;border-radius:2px;background:#fff"><div style="left:4px;top:1px;height:14px;line-height:14px;font-size:12px;color:#000;white-space:nowrap;font-family:"Liberation Mono",monospace;font-size:11px;letter-spacing:-0.5px;">10</div><svg width="11" height="7" viewBox="0 0 11 7" style="position:absolute;right:3px;top:4px"><path d="M1 1.2 L5.5 5.4 L10 1.2" fill="none" stroke="#000" stroke-width="2.3"/></svg></div>
<div class="" style="left:370px;top:410px;line-height:14px;height:14px;font-size:12px;color:#222;white-space:nowrap;"><span class="c">场</span></div>
<input type="checkbox"  style="position:absolute;left:387px;top:410px;width:13px;height:13px;margin:0">
<div class="" style="left:404px;top:410px;line-height:14px;height:14px;font-size:12px;color:#222;white-space:nowrap;"><span class="c">同客</span></div>
<input type="checkbox" checked style="position:absolute;left:431px;top:410px;width:13px;height:13px;margin:0">
<div class="" style="left:444px;top:410px;line-height:14px;height:14px;font-size:12px;color:#222;white-space:nowrap;"><span class="c">芬超</span></div>
<input type="checkbox" checked style="position:absolute;left:468px;top:410px;width:13px;height:13px;margin:0">
<div class="" style="left:481px;top:410px;line-height:14px;height:14px;font-size:12px;color:#222;white-space:nowrap;"><span class="c">芬兰杯</span></div>
<input type="checkbox" checked style="position:absolute;left:517px;top:410px;width:13px;height:13px;margin:0">
<div class="" style="left:530px;top:410px;line-height:14px;height:14px;font-size:12px;color:#222;white-space:nowrap;"><span class="c">球会友谊</span></div>
<input type="checkbox" checked style="position:absolute;left:578px;top:410px;width:13px;height:13px;margin:0">
<div class="" style="left:591px;top:410px;line-height:14px;height:14px;font-size:12px;color:#222;white-space:nowrap;"><span class="c">芬联杯</span></div>
<input type="checkbox" checked style="position:absolute;left:627px;top:410px;width:13px;height:13px;margin:0">
<div class="" style="left:640px;top:410px;line-height:14px;height:14px;font-size:12px;color:#222;white-space:nowrap;"><span class="c">芬甲</span></div>
<div style="left:449px;top:428px;width:58px;height:18px;border:1px solid #767676;border-radius:2px;background:#fff"><div style="left:5px;top:2px;height:18px;line-height:18px;font-size:12px;color:#000;white-space:nowrap;font-size:13px;">Crow*</div><svg width="11" height="7" viewBox="0 0 11 7" style="position:absolute;right:3px;top:6px"><path d="M1 1.2 L5.5 5.4 L10 1.2" fill="none" stroke="#000" stroke-width="2.3"/></svg></div>
<div style="left:516px;top:428px;width:34px;height:18px;border:1px solid #767676;border-radius:2px;background:#fff"><div style="left:4px;top:2px;height:18px;line-height:18px;font-size:12px;color:#000;white-space:nowrap;"><span class="c">终</span></div><svg width="11" height="7" viewBox="0 0 11 7" style="position:absolute;right:3px;top:6px"><path d="M1 1.2 L5.5 5.4 L10 1.2" fill="none" stroke="#000" stroke-width="2.3"/></svg></div>
<div style="left:611px;top:428px;width:82px;height:18px;border:1px solid #767676;border-radius:2px;background:#fff"><div style="left:4px;top:2px;height:18px;line-height:18px;font-size:12px;color:#000;white-space:nowrap;"><span class="c">胜平负均值</span></div><svg width="11" height="7" viewBox="0 0 11 7" style="position:absolute;right:3px;top:6px"><path d="M1 1.2 L5.5 5.4 L10 1.2" fill="none" stroke="#000" stroke-width="2.3"/></svg></div>
<div style="left:703px;top:428px;width:34px;height:18px;border:1px solid #767676;border-radius:2px;background:#fff"><div style="left:4px;top:2px;height:18px;line-height:18px;font-size:12px;color:#000;white-space:nowrap;"><span class="c">终</span></div><svg width="11" height="7" viewBox="0 0 11 7" style="position:absolute;right:3px;top:6px"><path d="M1 1.2 L5.5 5.4 L10 1.2" fill="none" stroke="#000" stroke-width="2.3"/></svg></div>
<div style="left:816px;top:428px;width:46px;height:18px;border:1px solid #767676;border-radius:2px;background:#fff"><div style="left:4px;top:2px;height:18px;line-height:18px;font-size:12px;color:#000;white-space:nowrap;"><span class="c">全场</span></div><svg width="11" height="7" viewBox="0 0 11 7" style="position:absolute;right:3px;top:6px"><path d="M1 1.2 L5.5 5.4 L10 1.2" fill="none" stroke="#000" stroke-width="2.3"/></svg></div>
</div></body></html>
